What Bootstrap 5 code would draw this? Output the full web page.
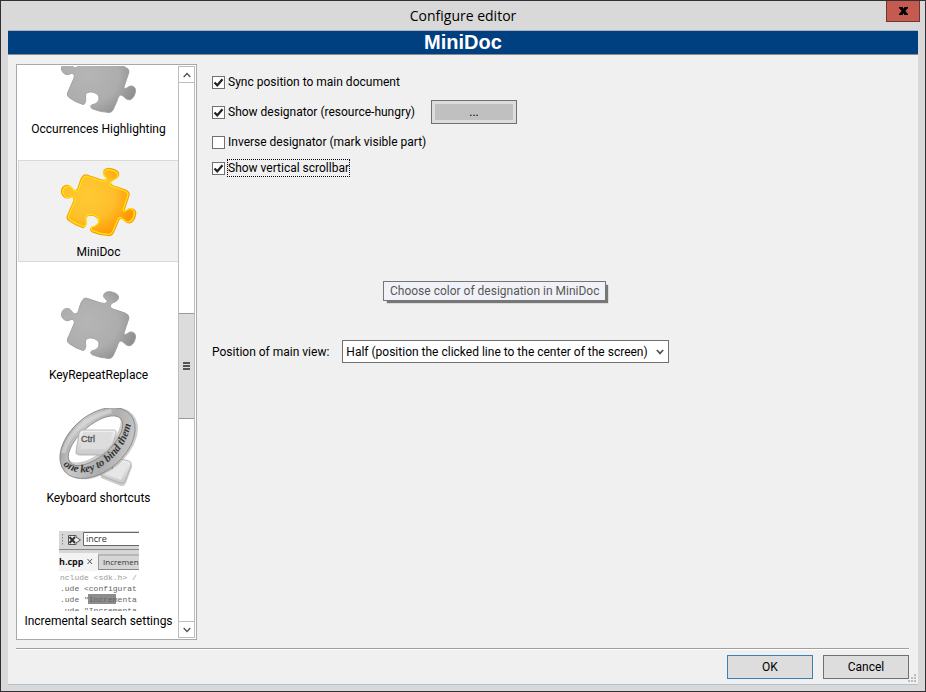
<!DOCTYPE html>
<html lang="en">
<head>
<meta charset="utf-8">
<meta name="viewport" content="width=device-width, initial-scale=1">
<title>Configure editor</title>
<link href="https://cdn.jsdelivr.net/npm/bootstrap@5.3.0/dist/css/bootstrap.min.css" rel="stylesheet">
<style>
  body { font-family: Roboto, "Open Sans", sans-serif; font-size: 12px; line-height: 16px; color: #000; background: #d9d9d9; }
  .win { border: 1px solid #322f35; padding: 0 7px 6px; background: #d9d9d9; }
  .win-title { height: 29px; }
  .win-title h1 { font: 14px/30px "Open Sans", "Noto Sans", sans-serif; }
  .win-close { top: 0; right: -2px; width: 34px; height: 21px; background: #c45a50; border: 1px solid #6b3733; border-top: 0; }
  .client { background: #f0f0f0; border-top: 1px solid #a9b5c2; border-bottom: 1px solid #b0bfce; }
  .banner { background: #004080; color: #fff; border-bottom: 1px solid #8c8c8c; font: bold 20px/23px "Liberation Sans", Arial, sans-serif; }
  .work { padding: 9px 8px 8px; gap: 15px; }
  .page-list { width: 181px; border: 1px solid #a7a8b0; padding: 1px; background: #fff; min-height: 0; }
  .page-items { padding-bottom: 7px; gap: 21px; min-height: 0; }
  .page-item { height: 102px; padding: 1px 0 0; gap: 2px; border: 1px solid transparent; border-right: 0; background: none; color: #000; }
  .page-item.current { background: #f1f1f1; border-color: #d9d9d9; }
  .page-item svg { width: 80px; height: 80px; flex: none; }
  .vbar { width: 17px; border: 1px solid #bdbdbd; background: #fff; }
  .vbar button { height: 16px; background: #fff; border: 0 solid #bdbdbd; }
  .vbar .up { border-bottom-width: 1px; }
  .vbar .down { border-top-width: 1px; }
  .vbar .thumb { height: 106px; background: #dcdcdc; border-width: 1px 0; border-color: #9a9a9a; }
  .track-a { flex: 231 1 0; }
  .track-b { flex: 202 1 0; }
  .opt { gap: 3px; }
  .opt input { appearance: none; width: 13px; height: 13px; border: 1px solid #707070; background: #fff center/11px no-repeat; }
  .opt input:checked { background-image: url("data:image/svg+xml,%3Csvg xmlns='http://www.w3.org/2000/svg' viewBox='0 0 11 11'%3E%3Cpath d='M1.5 5.5 4.3 8.3 9.5 2.2' fill='none' stroke='%23222' stroke-width='2.2'/%3E%3C/svg%3E"); }
  .options { padding-top: 10px; gap: 10px; }
  .focused { outline: 1px dotted #000; }
  .color-btn { width: 86px; height: 24px; background: #c0c0c0; border: 1px solid #707070; box-shadow: inset 0 0 0 3px #ddd; }
  .tip { left: 171px; top: 217px; padding: 1px 6px; background: #f1f2f7; border: 1px solid #767676; color: #575757; box-shadow: 3px 3px 1px -1px #777; }
  .view-row { margin-top: 164px; gap: 13px; }
  .view-row label { min-width: 117px; }
  .view-row select { appearance: none; width: 327px; height: 23px; padding: 0 3px; border: 1px solid #707070; color: #000; background: #fff url("data:image/svg+xml,%3Csvg xmlns='http://www.w3.org/2000/svg' viewBox='0 0 8 6'%3E%3Cpath d='M.8 1 4 4.4 7.2 1' fill='none' stroke='%23555' stroke-width='1.7'/%3E%3C/svg%3E") right 4px center/8px 6px no-repeat; }
  .foot { margin: 0 9px 0 8px; padding: 6px 0 5px; gap: 10px; border-top: 1px solid #a0a0a0; box-shadow: inset 0 1px #fff; }
  .foot button { width: 86px; height: 24px; background: #ddd; border: 1px solid #707070; color: #000; }
  .foot .ok { border-color: #3c7fb1; }
  .grip { right: 2px; bottom: 2px; }
</style>
<script src="https://cdn.jsdelivr.net/npm/bootstrap@5.3.0/dist/js/bootstrap.bundle.min.js"></script>
</head>
<body>
<svg width="0" height="0" class="position-absolute" aria-hidden="true">
  <defs>
    <radialGradient id="grayFill" cx="35%" cy="45%" r="70%"><stop offset="0" stop-color="#b5b5b5"/><stop offset=".6" stop-color="#adadad"/><stop offset="1" stop-color="#8c8c8c"/></radialGradient>
    <radialGradient id="goldFill" cx="35%" cy="40%" r="68%"><stop offset="0" stop-color="#ffca35"/><stop offset=".55" stop-color="#fdbf2b"/><stop offset="1" stop-color="#ff9500"/></radialGradient>
    <linearGradient id="bandFill" x1="0" y1="0" x2="1" y2="1"><stop offset="0" stop-color="#858585"/><stop offset=".3" stop-color="#c9c9c9"/><stop offset=".6" stop-color="#adadad"/><stop offset="1" stop-color="#d5d5d5"/></linearGradient>
    <linearGradient id="keyFill" x1="0" y1="0" x2="0" y2="1"><stop offset="0" stop-color="#f1f1f1"/><stop offset="1" stop-color="#c9c9c9"/></linearGradient>
    <path id="puzzle" d="M25 13.500Q27 12.500 30 14L42 18Q46 19 48 17.500C49.500 15 44.500 14 44.500 10.500C45 7 49 6 53 7C57 8 60 10 59.500 13C59 17 53 17 51.500 20C50.500 23 54 24 57 25L66 28Q70.500 30 70 33L65 48C65 51 68 49 70 47.500C73 46 77 48 76.500 52C76 57 73 61 70 60.800C66 60.500 65 56.500 62 56C60 56 59 59 58 62L54.500 70Q53 73.500 50 73.500Q41 73 34 70C31 69 31 66 34 65.500C37 65 40 62.500 40 59C40 55 35 53 31.500 53C28 53 26 55 26.500 58C27 61 27 65 24 65.500Q16 63 10 58.500Q7.500 56.500 8.500 54L15 39C16 35 13.500 33.500 11 35C7 37 3 34 2.500 30C2.500 26 5 23 9 23.500C12.500 24 13 28.500 16 29C19 29 19.500 25 20.500 22Q22.500 15 25 13.500Z"/>
  </defs>
</svg>

<div class="win vh-100 d-flex flex-column overflow-hidden">
  <header class="win-title position-relative flex-shrink-0">
    <h1 class="m-0 text-center">Configure editor</h1>
    <button class="win-close position-absolute p-0 d-flex align-items-center justify-content-center" aria-label="Close">
      <svg width="9" height="8" viewBox="0 0 9 8" aria-hidden="true"><path d="M0 0h3.500L4.500 1.700 5.500 0H9v1L6.300 4 9 7v1H5.500L4.500 6.300 3.500 8H0V7L2.700 4 0 1z"/></svg>
    </button>
  </header>

  <div class="client flex-grow-1 d-flex flex-column position-relative overflow-hidden">
    <h2 class="banner m-0 text-center flex-shrink-0">MiniDoc</h2>

    <div class="work d-flex flex-grow-1 overflow-hidden">
      <nav class="page-list d-flex flex-shrink-0" aria-label="Settings pages">
        <div class="page-items d-flex flex-column flex-grow-1 justify-content-end overflow-hidden">
          <button class="page-item d-flex flex-column align-items-center flex-shrink-0">
            <svg viewBox="0 0 80 80" aria-hidden="true"><use href="#puzzle" fill="url(#grayFill)" stroke="#a2a2a2"/></svg>
            <span>Occurrences Highlighting</span>
          </button>
          <button class="page-item current d-flex flex-column align-items-center flex-shrink-0" aria-current="page">
            <svg viewBox="0 0 80 80" aria-hidden="true"><use href="#puzzle" fill="#ffe600" stroke="#f7a01c" stroke-width="1.500"/><use href="#puzzle" fill="url(#goldFill)" stroke="#ffe500" stroke-width="1.200" transform="translate(1.500 1.500) scale(.962)"/></svg>
            <span>MiniDoc</span>
          </button>
          <button class="page-item d-flex flex-column align-items-center flex-shrink-0">
            <svg viewBox="0 0 80 80" aria-hidden="true"><use href="#puzzle" fill="url(#grayFill)" stroke="#a2a2a2"/></svg>
            <span>KeyRepeatReplace</span>
          </button>
          <button class="page-item d-flex flex-column align-items-center flex-shrink-0">
            <svg viewBox="0 0 80 80" aria-hidden="true">
              <path d="M42 66 56 51 70 55Q74 56 73 59L67 75Q65 79 62 78L42 70Z" fill="#aaa" opacity=".6"/>
              <path d="M40 63 54 49 70 53Q73 54 72 57L66 73Q65 76 61 75L41 67Z" fill="url(#keyFill)" stroke="#aaa" stroke-width=".8"/>
              <path d="M40 64 52 54 68 58 62 72Z" fill="#e6e6e6"/>
              <path d="M54 57 53 61" stroke="#777" stroke-width="1.200"/>
              <g transform="rotate(-41 38.500 35)">
                <path fill-rule="evenodd" fill="#999" opacity=".5" d="M-4 37a44 28 0 1 0 88 0a44 28 0 1 0-88 0M6 29a33 15 0 1 0 66 0a33 15 0 1 0-66 0"/>
                <path fill-rule="evenodd" fill="url(#bandFill)" stroke="#838383" stroke-width=".8" d="M-5 35a43.500 28 0 1 0 87 0a43.500 28 0 1 0-87 0M5 32a33.500 15.500 0 1 0 67 0a33.500 15.500 0 1 0-67 0"/>
                <path d="M6 20Q35 2 70 20" fill="none" stroke="#e4e4e4" stroke-width="4" opacity=".5"/>
              </g>
              <path d="M24 22H54Q58 22 57 25L54 36Q49 43 43 47H21Q16 47 17 43L20 26Q20 22 24 22Z" fill="url(#keyFill)" stroke="#a2a2a2" stroke-width=".7"/>
              <path d="M24 24H54L50 38 46 41H22Z" fill="#ddd"/>
              <text x="22" y="34" font-family="Liberation Sans" font-size="9" fill="#555" stroke="#555" stroke-width=".3">Ctrl</text>
              <path id="bandLine" d="M4 57Q21 72 45 57Q68 41 73 12" fill="none"/>
              <text font-family="Liberation Serif" font-size="11" font-weight="bold" font-style="italic" fill="#333"><textPath href="#bandLine">one key to bind them</textPath></text>
            </svg>
            <span>Keyboard shortcuts</span>
          </button>
          <button class="page-item d-flex flex-column align-items-center flex-shrink-0">
            <svg viewBox="0 0 80 80" aria-hidden="true">
              <path fill="#fff" d="M0 0H80V80H0Z"/>
              <path fill="#d6d6d6" d="M0 0H80V39H0Z"/>
              <path d="M3.500 3V15" stroke="#888" stroke-dasharray="1.500 1.500"/>
              <path fill="#fff" stroke="#666" d="M24.500 1.500H82V14.500H24.500Z"/>
              <path fill="#eee" stroke="#555" d="M9.500 4.500H17V6L21.500 9 17 12V13.500H9.500Z"/>
              <path d="M10.500 6 16 12M16 6 10.500 12" stroke="#333" stroke-width="2"/>
              <path d="M0 18.500H80M39 38.500H80" stroke="#888"/>
              <path fill="#f3f3f3" d="M0 22H39V40H0Z"/><path d="M39.500 39V24H80" fill="none" stroke="#999"/>
              <g font-family="Open Sans" font-size="9" fill="#333"><text x="27" y="11">incre</text><text x="0" y="34" font-weight="bold" fill="#111">h.cpp</text><text x="44" y="34" font-size="8">Incremen</text></g>
              <path d="M28.500 28 33 33M33 28 28.500 33" stroke="#555"/>
              <path fill="#8c8c8c" d="M29 63H57V73H29Z"/>
              <g font-family="Liberation Mono" font-size="8" fill="#666"><text x="1" y="49" fill="#999">nclude &lt;sdk.h&gt; /</text><text x="1" y="60">.ude &lt;configurat</text><text x="1" y="71">.ude "Incrementa</text><text x="1" y="82">.ude "Incrementa</text></g>
            </svg>
            <span>Incremental search settings</span>
          </button>
        </div>
        <div class="vbar d-flex flex-column flex-shrink-0">
          <button class="up p-0 d-flex align-items-center justify-content-center" aria-label="Scroll up"><svg width="8" height="6" viewBox="0 0 8 6"><path d="M.700 5 4 1.500 7.300 5" fill="none" stroke="#555" stroke-width="1.400"/></svg></button>
          <div class="track-a"></div>
          <button class="thumb p-0 d-flex align-items-center justify-content-center" aria-label="Scroll position"><svg width="7" height="8" viewBox="0 0 7 8"><path d="M0 1H7M0 4H7M0 7H7" stroke="#555" stroke-width="2"/></svg></button>
          <div class="track-b"></div>
          <button class="down p-0 d-flex align-items-center justify-content-center" aria-label="Scroll down"><svg width="8" height="6" viewBox="0 0 8 6"><path d="M.700 1 4 4.500 7.300 1" fill="none" stroke="#555" stroke-width="1.400"/></svg></button>
        </div>
      </nav>

      <main class="flex-grow-1 position-relative">
        <div class="options d-flex flex-column">
          <div class="opt d-flex align-items-center"><input type="checkbox" id="sync" checked><label for="sync">Sync position to main document</label></div>
          <div class="d-flex align-items-center gap-3">
            <div class="opt d-flex align-items-center"><input type="checkbox" id="desig" checked><label for="desig">Show designator (resource-hungry)</label></div>
            <button class="color-btn p-0" aria-label="Designator color">...</button>
          </div>
          <div class="opt d-flex align-items-center"><input type="checkbox" id="inverse"><label for="inverse">Inverse designator (mark visible part)</label></div>
          <div class="opt d-flex align-items-center"><input type="checkbox" id="vscroll" checked><label class="focused" for="vscroll">Show vertical scrollbar</label></div>
        </div>
        <div class="view-row d-flex align-items-center">
          <label for="mainview">Position of main view:</label>
          <select id="mainview"><option>Half (position the clicked line to the center of the screen)</option></select>
        </div>
        <div class="tip position-absolute text-nowrap" role="tooltip">Choose color of designation in MiniDoc</div>
      </main>
    </div>

    <footer class="foot d-flex justify-content-end flex-shrink-0">
      <button class="ok p-0">OK</button>
      <button class="p-0">Cancel</button>
    </footer>
    <svg class="grip position-absolute" width="8" height="8" viewBox="0 0 8 8" aria-hidden="true"><path fill="#bbb" d="M6 0h2v2H6zM3 3h2v2H3zM6 3h2v2H6zM0 6h2v2H0zM3 6h2v2H3zM6 6h2v2H6z"/></svg>
  </div>
</div>
</body>
</html>
